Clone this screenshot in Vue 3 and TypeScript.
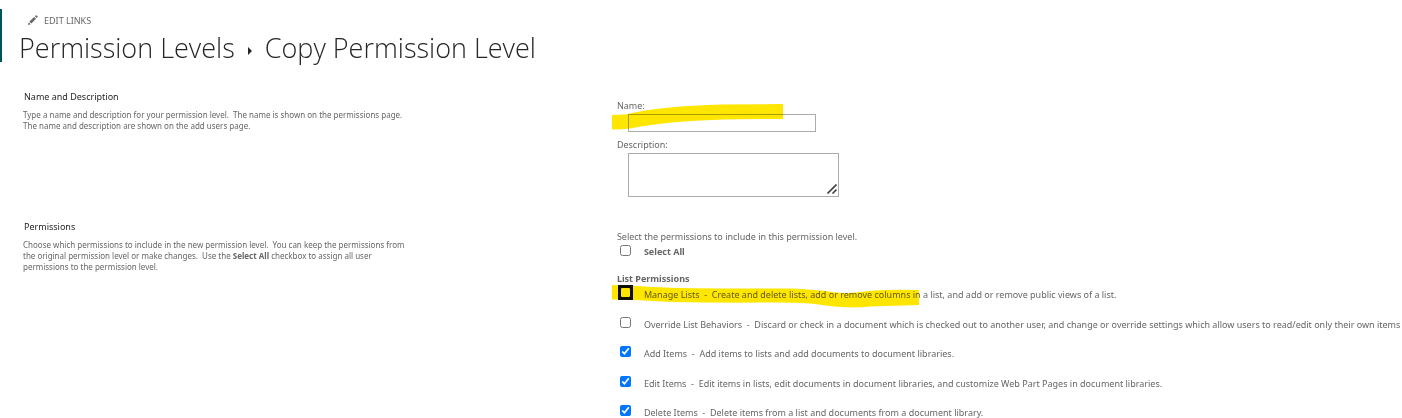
<script setup lang="ts">
import { ref } from 'vue'

interface Permission {
  id: string
  name: string
  detail: string
  checked: boolean
  focused?: boolean
}

const levelName = ref('')
const levelDescription = ref('')
const selectAll = ref(false)

const permissions = ref<Permission[]>([
  { id: 'manage', name: 'Manage Lists', detail: 'Create and delete lists, add or remove columns in a list, and add or remove public views of a list.', checked: false, focused: true },
  { id: 'override', name: 'Override List Behaviors', detail: 'Discard or check in a document which is checked out to another user, and change or override settings which allow users to read/edit only their own items', checked: false },
  { id: 'add', name: 'Add Items', detail: 'Add items to lists and add documents to document libraries.', checked: true },
  { id: 'edit', name: 'Edit Items', detail: 'Edit items in lists, edit documents in document libraries, and customize Web Part Pages in document libraries.', checked: true },
  { id: 'delete', name: 'Delete Items', detail: 'Delete items from a list and documents from a document library.', checked: true },
])
</script>

<template>
  <div class="page">
    <header class="header">
      <a class="edit-links" href="#">
        <svg class="pencil" viewBox="0 0 10 10" aria-hidden="true">
          <path d="M0 10 L0.8 7.200 L2.800 9.2 Z M1.4 6.500 L6.2 1.9 L8 3.700 L3.400 8.5 Z M6.9 1.2 L7.7 0.4 Q8.2 0 8.8 0.5 L9.5 1.2 Q10 1.8 9.6 2.3 L8.800 3.1 Z" />
        </svg>
        <span>EDIT LINKS</span>
      </a>
      <h1 class="title">
        <span>Permission Levels</span>
        <svg class="arrow" viewBox="0 0 4 8" aria-hidden="true"><path d="M0 0 L4 4 L0 8 Z" /></svg>
        <span>Copy Permission Level</span>
      </h1>
    </header>

    <main>
      <section class="section naming">
        <div class="intro">
          <h2>Name and Description</h2>
          <p>Type a name and description for your permission level.&nbsp; The name is shown on the permissions page.&nbsp; The name and description are shown on the add users page.</p>
        </div>
        <div class="fields">
          <label for="level-name">Name:</label>
          <input id="level-name" v-model="levelName" class="box name-box" type="text">
          <label for="level-description">Description:</label>
          <div class="area">
            <textarea id="level-description" v-model="levelDescription" class="box"></textarea>
            <svg class="grip" viewBox="0 0 10 10" aria-hidden="true"><path d="M0.5 9.5 L9.5 0.5 M5.5 9.5 L9.5 5.5" /></svg>
          </div>
          <svg class="marker marker-name" viewBox="0 0 171 26" aria-hidden="true">
            <path d="M0 11 L13 10.500 Q50 2 110 0.600 L171 0 V15 Q100 14.500 60 18.500 Q36 21 18 24.500 Q10 25.500 0 25.500 Z" />
          </svg>
        </div>
      </section>

      <section class="section">
        <div class="intro">
          <h2>Permissions</h2>
          <p>Choose which permissions to include in the new permission level.&nbsp; You can keep the permissions from the original permission level or make changes.&nbsp; Use the <b>Select All</b> checkbox to assign all user permissions to the permission level.</p>
        </div>
        <div class="fields choices">
          <div>Select the permissions to include in this permission level.</div>
          <div class="select-all">
            <input id="select-all" v-model="selectAll" type="checkbox">
            <label for="select-all"><b>Select All</b></label>
          </div>
          <h3>List Permissions</h3>
          <ul class="list">
            <li v-for="item in permissions" :key="item.id">
              <input :id="item.id" v-model="item.checked" type="checkbox" :class="{ focused: item.focused }">
              <label :for="item.id">{{ item.name }}&nbsp; -&nbsp; {{ item.detail }}</label>
            </li>
          </ul>
          <svg class="marker marker-list" viewBox="0 0 307 23" aria-hidden="true">
            <path d="M0 0 L25 1 Q50 3 110 3.500 L178 3.500 Q205 4.500 220 7 Q234 9 248 7 Q270 4 307 5 V20 L258 21.500 Q234 24 210 20 Q195 17 160 17.500 Q90 18 48 16.500 Q25 14.500 0 14.500 Z" />
          </svg>
        </div>
      </section>
    </main>
  </div>
</template>

<style>
body {
  margin: 0;
  overflow: hidden;
  background: #fff;
}
</style>

<style scoped>
.page {
  font-family: "Noto Sans", "Open Sans", sans-serif;
  font-size: 9px;
  line-height: 11px;
  color: #666;
  padding-top: 9px;
}
.header {
  height: 53px;
  box-sizing: border-box;
  border-left: 2px solid #00535b;
  padding: 5px 0 0 26px;
}
.edit-links {
  display: flex;
  align-items: center;
  gap: 6px;
  height: 12px;
  color: #666;
  text-decoration: none;
}
.pencil {
  width: 10px;
  height: 10px;
  fill: #666;
}
.title {
  display: flex;
  align-items: center;
  gap: 13px;
  margin: 3px 0 0 -9px;
  font-family: "Open Sans", "Noto Sans", sans-serif;
  font-size: 27px;
  line-height: 38px;
  font-weight: 300;
  color: #262626;
  white-space: nowrap;
}
.arrow {
  width: 4px;
  height: 8px;
  margin-top: 6px;
  fill: #262626;
}
.section {
  display: grid;
  grid-template-columns: 44fr 56fr;
}
.naming {
  padding: 29px 0 24px;
}
.intro {
  padding-left: 23px;
}
h2 {
  margin: 0 0 6px 1px;
  font-size: 9px;
  line-height: 12px;
  font-weight: 400;
  color: #262626;
}
p {
  margin: 0;
  max-width: 394px;
  font-size: 8px;
}
.fields {
  position: relative;
  min-width: 0;
  padding-top: 9px;
}
.fields.choices {
  padding-top: 10px;
}
.fields label {
  white-space: nowrap;
}
.naming label {
  display: block;
}
.box {
  display: block;
  box-sizing: border-box;
  border: 1px solid #ababab;
  background: #fff;
  font: inherit;
  outline: none;
}
.name-box {
  width: 188px;
  height: 18px;
  margin: 3px 0 7px 11px;
  padding: 2px 4px;
}
.area {
  position: relative;
  width: 211px;
  margin: 3px 0 0 11px;
}
.area textarea {
  width: 100%;
  height: 44px;
  resize: none;
}
.grip {
  position: absolute;
  right: 2px;
  bottom: 3px;
  width: 10px;
  height: 10px;
  fill: none;
  stroke: #444;
  stroke-width: 1.6;
}
.select-all,
.list li {
  display: flex;
  gap: 13px;
}
.select-all {
  height: 14px;
  margin-top: 3px;
}
input[type="checkbox"] {
  flex: none;
  width: 11px;
  height: 11px;
  margin: 0 0 0 3px;
}
.select-all label {
  padding-top: 1px;
}
.focused {
  outline: 3px solid #101010;
  outline-offset: -1px;
  border-radius: 1px;
}
h3 {
  margin: 14px 0 3px;
  font-size: 9px;
  line-height: 11px;
  font-weight: 700;
}
.list {
  margin: 0;
  padding: 0;
  list-style: none;
}
.list li {
  height: 29px;
}
.list li:nth-child(odd) {
  height: 30px;
}
.list label {
  padding-top: 2px;
}
.marker {
  position: absolute;
  left: -5px;
  fill: #ffe600;
  mix-blend-mode: multiply;
  pointer-events: none;
}
.marker-name {
  top: 13px;
  width: 171px;
  height: 26px;
}
.marker-list {
  top: 64px;
  width: 307px;
  height: 23px;
}
</style>
